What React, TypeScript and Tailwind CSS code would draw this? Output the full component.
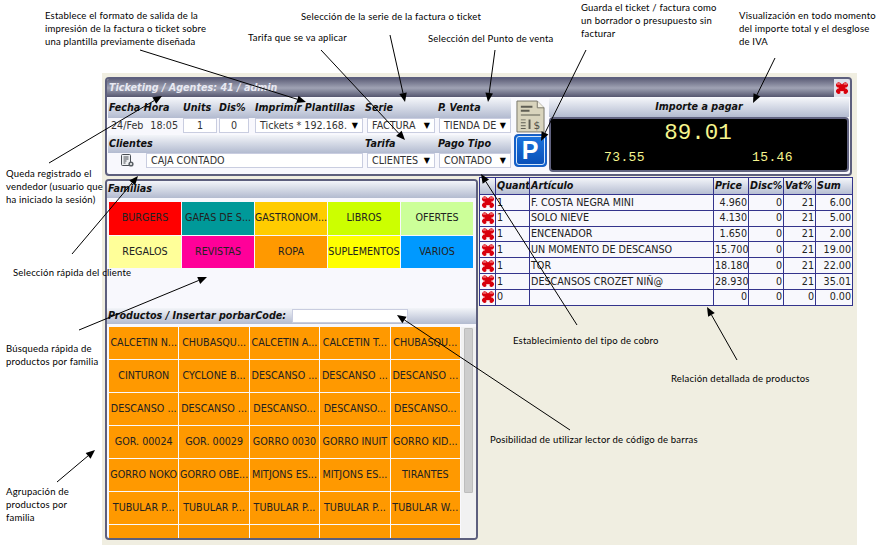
import React from "react";

const app = "font-['DejaVu_Sans',sans-serif]";

function RedX({ size = 14 }: { size?: number }) {
  return (
    <svg width={size} height={size} viewBox="0 0 16 16" className="block shrink-0">
      <path d="M4.2 4.6 L11.8 11.6 M11.8 4.6 L4.2 11.6" stroke="#d8000c" strokeWidth="6" strokeLinecap="round" />
      <path d="M2.6 3.4 L5.6 3.4 M10.4 3.4 L13.4 3.4 M2.6 8 L4 8 M12 8 L13.4 8" stroke="#ffb4b4" strokeWidth="1.1" strokeLinecap="round" />
      <path d="M6.6 12.6 L9.4 12.6" stroke="#ffffff" strokeWidth="1.6" strokeLinecap="round" />
    </svg>
  );
}

const hdr = "bg-linear-to-b from-[#f3f5f9] to-[#b3bbd0]";
const lbl = "font-bold italic text-[9.6px] text-[#111]";

function Inp({ w, children, center, arrow }: { w: string; children?: React.ReactNode; center?: boolean; arrow?: boolean }) {
  return (
    <div className={`${w} h-[15px] bg-white border border-[#c9cde0] flex items-center text-[9.6px] leading-none text-[#333] px-[4px] overflow-hidden whitespace-nowrap ${center ? "justify-center" : "justify-between"}`}>
      <span>{children}</span>
      {arrow && <span className="text-[8px] text-black ml-[2px]">▼</span>}
    </div>
  );
}

const families: [string, string][] = [
  ["BURGERS", "bg-[#ff0000]"],
  ["GAFAS DE S...", "bg-[#009999]"],
  ["GASTRONOM...", "bg-[#ffcc00]"],
  ["LIBROS", "bg-[#ccff00]"],
  ["OFERTES", "bg-[#ccff99]"],
  ["REGALOS", "bg-[#ffff99]"],
  ["REVISTAS", "bg-[#ff0099]"],
  ["ROPA", "bg-[#ff9900]"],
  ["SUPLEMENTOS", "bg-[#ffff00]"],
  ["VARIOS", "bg-[#0099ff]"],
];

const products = [
  "CALCETIN N...", "CHUBASQU...", "CALCETIN A...", "CALCETIN T...", "CHUBASQU...",
  "CINTURON", "CYCLONE B...", "DESCANSO ...", "DESCANSO ...", "DESCANSO ...",
  "DESCANSO ...", "DESCANSO ...", "DESCANSO...", "DESCANSO...", "DESCANSO...",
  "GOR. 00024", "GOR. 00029", "GORRO 0030", "GORRO INUIT", "GORRO KID...",
  "GORRO NOKO", "GORRO OBE...", "MITJONS ES...", "MITJONS ES...", "TIRANTES",
  "TUBULAR P...", "TUBULAR P...", "TUBULAR P...", "TUBULAR P...", "TUBULAR W...",
  "", "", "", "", "",
];

const rows: [string, string, string, string, string, string][] = [
  ["1", "F. COSTA NEGRA MINI", "4.960", "0", "21", "6.00"],
  ["1", "SOLO NIEVE", "4.130", "0", "21", "5.00"],
  ["1", "ENCENADOR", "1.650", "0", "21", "2.00"],
  ["1", "UN MOMENTO DE DESCANSO", "15.700", "0", "21", "19.00"],
  ["1", "TOR", "18.180", "0", "21", "22.00"],
  ["1", "DESCANSOS CROZET NIÑ@", "28.930", "0", "21", "35.01"],
  ["0", "", "0", "0", "0", "0.00"],
];

const notes: { x: number; y: number; lines: string[] }[] = [
  { x: 45, y: 10, lines: ["Establece el formato de salida de la", "impresión de la factura o ticket sobre", "una plantilla previamente diseñada"] },
  { x: 301, y: 11, lines: ["Selección de la serie de la factura o ticket"] },
  { x: 248, y: 32, lines: ["Tarifa que se va aplicar"] },
  { x: 428, y: 33, lines: ["Selección del Punto de venta"] },
  { x: 581, y: 2, lines: ["Guarda el ticket / factura como", "un borrador o presupuesto sin", "facturar"] },
  { x: 739, y: 10, lines: ["Visualización en todo momento", "del importe total y el desglose", "de IVA"] },
  { x: 6, y: 168, lines: ["Queda registrado el", "vendedor (usuario que", "ha iniciado la sesión)"] },
  { x: 13, y: 267, lines: ["Selección rápida del cliente"] },
  { x: 6, y: 343, lines: ["Búsqueda rápida de", "productos por familia"] },
  { x: 513, y: 335, lines: ["Establecimiento del tipo de cobro"] },
  { x: 671, y: 373, lines: ["Relación detallada de productos"] },
  { x: 490, y: 434, lines: ["Posibilidad de utilizar lector de código de barras"] },
  { x: 6, y: 486, lines: ["Agrupación de", "productos por", "familia"] },
];

const arrows: [number, number, number, number][] = [
  [140, 50, 306, 102],
  [321, 50, 405, 140],
  [390, 35, 405, 102],
  [495, 50, 488, 102],
  [586, 50, 541, 141],
  [775, 58, 753, 103],
  [49, 163, 162, 96],
  [72, 254, 138, 176],
  [79, 330, 207, 277],
  [577, 325, 481, 174],
  [737, 360, 707, 307],
  [570, 430, 397, 315],
  [57, 482, 95, 450],
];

function Arrow({ a }: { a: [number, number, number, number] }) {
  const [x1, y1, x2, y2] = a;
  const L = Math.hypot(x2 - x1, y2 - y1);
  const ux = (x2 - x1) / L;
  const uy = (y2 - y1) / L;
  const bx = x2 - ux * 9;
  const by = y2 - uy * 9;
  const px = -uy * 3.8;
  const py = ux * 3.8;
  return (
    <g>
      <line x1={x1} y1={y1} x2={bx} y2={by} stroke="#000" strokeWidth="1" />
      <polygon points={`${x2},${y2} ${bx + px},${by + py} ${bx - px},${by - py}`} fill="#000" />
    </g>
  );
}

const td = "border border-[#34348c] px-[1px] py-0 h-[15.8px] leading-none overflow-hidden whitespace-nowrap";

export default function App() {
  return (
    <div className={`relative w-[883px] h-[549px] bg-white overflow-hidden ${app}`}>
      <div className="ml-[102px] pt-[73px]">
        <div className="w-[755px] h-[472px] bg-[#f0eee1] pt-[4px] pl-[3px] flex flex-col gap-[1px]">
          {/* top panel */}
          <div className="w-[747px] h-[99px] border-2 border-[#5d5f7d] rounded-[4px] bg-[#f8f8fd] flex flex-col overflow-hidden shrink-0">
            <div className="h-[18px] shrink-0 flex items-center justify-between bg-linear-to-b from-[#62637c] via-[#a0a3b4] to-[#565770]">
              <span className="pl-[2px] text-[9.6px] font-bold italic text-[#e8e9f2]">Ticketing / Agentes: 41 / admin</span>
              <span className="h-full w-[16px] bg-[#dfe1ea] flex items-center justify-center"><RedX size={14} /></span>
            </div>
            <div className="flex flex-1 pt-[1px]">
              <div className="w-[405px] shrink-0 grid grid-cols-[75px_36px_36px_110px_73px_73px] grid-rows-[20px_17px_18px_18px] pl-[1px]">
                <div className={`${hdr} ${lbl} flex items-center pl-[1px]`}>Fecha Hora</div>
                <div className={`${hdr} ${lbl} flex items-center`}>Units</div>
                <div className={`${hdr} ${lbl} flex items-center`}>Dis%</div>
                <div className={`${hdr} ${lbl} flex items-center`}>Imprimir Plantillas</div>
                <div className={`${hdr} ${lbl} flex items-center`}>Serie</div>
                <div className={`${hdr} ${lbl} flex items-center`}>P. Venta</div>

                <div className="flex items-start justify-between text-[9.6px] leading-[15px] text-[#333] pl-[3px] pr-[5px]"><span>24/Feb</span><span>18:05</span></div>
                <div className="flex items-start"><Inp w="w-[34px]" center>1</Inp></div>
                <div className="flex items-start"><Inp w="w-[30px]" center>0</Inp></div>
                <div className="flex items-start"><Inp w="w-[108px]" arrow>Tickets * 192.168.</Inp></div>
                <div className="flex items-start pl-[2px]"><Inp w="w-[68px]" arrow>FACTURA</Inp></div>
                <div className="flex items-start pl-[1px]"><Inp w="w-[72px]" arrow>TIENDA DE</Inp></div>

                <div className={`${hdr} ${lbl} col-span-4 flex items-center pl-[1px]`}>Clientes</div>
                <div className={`${hdr} ${lbl} flex items-center`}>Tarifa</div>
                <div className={`${hdr} ${lbl} flex items-center`}>Pago Tipo</div>

                <div className="col-span-4 flex items-start">
                  <div className="w-[38px] flex justify-center shrink-0">
                    <svg width="15" height="15" viewBox="0 0 15 15">
                      <rect x="1.5" y="1.5" width="9" height="11" rx="1" fill="#eef0f2" stroke="#4a4f55" />
                      <path d="M3.5 4h5M3.5 6h5M3.5 8h3M3.5 10h2" stroke="#4a4f55" strokeWidth="1" />
                      <circle cx="11" cy="11" r="2.6" fill="#5a6066" />
                      <circle cx="11" cy="11" r="1" fill="#fff" />
                    </svg>
                  </div>
                  <Inp w="w-[217px]">CAJA CONTADO</Inp>
                </div>
                <div className="flex items-start pl-[2px]"><Inp w="w-[68px]" arrow>CLIENTES</Inp></div>
                <div className="flex items-start pl-[1px]"><Inp w="w-[72px]" arrow>CONTADO</Inp></div>
              </div>

              <div className="w-[36px] shrink-0 flex flex-col items-center">
                <svg width="29" height="33" viewBox="0 0 30 34" className="mt-[2px]">
                  <path d="M1 1H22L29 8V33H1Z" fill="#d9d4bd" stroke="#77756a" />
                  <path d="M22 1V8H29" fill="#f3f0e2" stroke="#77756a" />
                  <path d="M5 6H17V8H5ZM5 10H14V12H5ZM5 15H25V16H5ZM5 20H10V21H5ZM5 23H10V24H5ZM5 26H10V27H5ZM5 29H10V30H5ZM13 20H15V30H13Z" fill="#5f5e54" />
                  <text x="18" y="30" fontSize="11" fill="#4f4e46" fontFamily="DejaVu Sans">$</text>
                </svg>
                <div className="mt-[1px] w-[33px] h-[33px] rounded-[4px] border border-[#1f5fc0] bg-[#0d62d0] p-[1px] shrink-0">
                  <div className="w-full h-full rounded-[3px] border border-[#d6e6fa] bg-linear-to-b from-[#1b72dc] to-[#0a50b8] flex items-center justify-center text-white font-bold text-[25px] leading-none font-['Liberation_Sans',sans-serif]">P</div>
                </div>
              </div>

              <div className="flex-1 min-w-0 pr-[1px] flex flex-col">
                <div className={`${hdr} ${lbl} h-[19px] ml-[1px] shrink-0 flex items-center justify-center text-center`}>Importe a pagar</div>
                <div className="ml-[1px] h-[55px] bg-black rounded-[4px] border-2 border-[#60627f] flex flex-col items-center font-['Liberation_Mono',monospace] text-[#f6f58e]">
                  <div className="text-[22.5px] leading-none mt-[3px] -ml-[2px]">89.01</div>
                  <div className="w-full flex justify-between pl-[53px] pr-[54px] mt-[6px] text-[13px] leading-none tracking-[0.4px]">
                    <span>73.55</span><span>15.46</span>
                  </div>
                </div>
              </div>
            </div>
          </div>

          {/* bottom */}
          <div className="flex items-start gap-[1px]">
            <div className="w-[373px] h-[361px] mt-[2px] border-2 border-[#5d5f7d] rounded-[4px] bg-[#f8f8fd] flex flex-col overflow-hidden shrink-0">
              <div className={`${hdr} ${lbl} h-[17px] shrink-0 flex items-center pl-[1px]`}>Familias</div>
              <div className="grid grid-cols-5 gap-[1px] mt-[4px] ml-[2px] w-[364px] auto-rows-[32.5px] shrink-0">
                {families.map(([t, c]) => (
                  <div key={t} className={`${c} flex items-center justify-center text-[9.6px] text-[#222] whitespace-nowrap overflow-hidden`}>{t}</div>
                ))}
              </div>
              <div className={`${hdr} ${lbl} h-[16px] shrink-0 mt-[40px] flex items-center pl-[1px] gap-[6px]`}>
                <span>Productos / Insertar porbarCode:</span>
                <span className="w-[116px] h-[14px] bg-white border border-[#c9cde0] block" />
              </div>
              <div className="flex flex-1 min-h-0 mt-[3px] overflow-hidden">
                <div className="grid grid-cols-5 gap-[1px] ml-[2px] w-[351px] auto-rows-[32px] shrink-0 content-start">
                  {products.map((t, i) => (
                    <div key={i} className="bg-[#ff9900] flex items-center justify-center text-[9.6px] text-[#222] whitespace-nowrap overflow-hidden">{t}</div>
                  ))}
                </div>
                <div className="w-[15px] ml-[1px] bg-[#f1f1f1] flex justify-center pt-[1px] shrink-0">
                  <div className="w-[9px] h-[165px] bg-[#cdcdcd] border border-[#bdbdbd] rounded-[1px]" />
                </div>
              </div>
            </div>

            <table className="w-[373px] border-collapse table-fixed text-[9.6px] text-[#222] bg-[#f8f8fd]">
              <colgroup>
                <col className="w-[16px]" /><col className="w-[34px]" /><col className="w-[184px]" /><col className="w-[35px]" /><col className="w-[35px]" /><col className="w-[32px]" /><col className="w-[37px]" />
              </colgroup>
              <thead>
                <tr className={`${hdr} ${lbl}`}>
                  <th className={`${td} h-[17px]`}></th>
                  <th className={`${td} text-left font-bold`}>Quant</th>
                  <th className={`${td} text-left font-bold`}>Artículo</th>
                  <th className={`${td} text-left font-bold`}>Price</th>
                  <th className={`${td} text-left font-bold`}>Disc%</th>
                  <th className={`${td} text-left font-bold`}>Vat%</th>
                  <th className={`${td} text-left font-bold`}>Sum</th>
                </tr>
              </thead>
              <tbody>
                {rows.map((r, i) => (
                  <tr key={i}>
                    <td className={td}><RedX size={14} /></td>
                    <td className={td}>{r[0]}</td>
                    <td className={td}>{r[1]}</td>
                    <td className={`${td} text-right`}>{r[2]}</td>
                    <td className={`${td} text-right`}>{r[3]}</td>
                    <td className={`${td} text-right`}>{r[4]}</td>
                    <td className={`${td} text-right`}>{r[5]}</td>
                  </tr>
                ))}
              </tbody>
            </table>
          </div>
        </div>
      </div>

      {/* callout annotations laid over the screenshot */}
      <svg width="883" height="549" className="absolute left-0 top-0 pointer-events-none">
        {arrows.map((a, i) => <Arrow key={i} a={a} />)}
      </svg>
      {notes.map((n, i) => (
        <div key={i} style={{ left: n.x, top: n.y }} className="absolute text-[9.5px] leading-[12.8px] text-black whitespace-nowrap font-['Lato',sans-serif] tracking-[0.2px]">
          {n.lines.map((l, j) => <div key={j}>{l}</div>)}
        </div>
      ))}
    </div>
  );
}
